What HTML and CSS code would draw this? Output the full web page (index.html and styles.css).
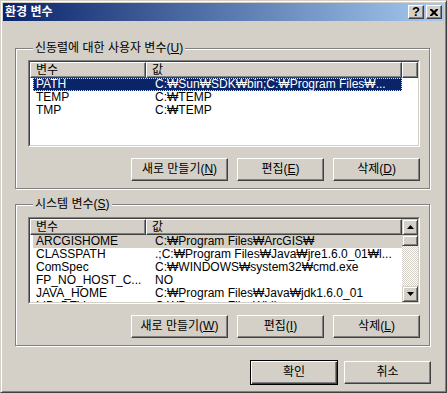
FILE: index.html
```html
<!DOCTYPE html>
<html lang="ko">
<head>
    <meta charset="UTF-8">
    <title>환경 변수</title>
    <link rel="stylesheet" href="styles.css">
</head>
<body>
    <div class="window">
        <div class="titlebar">
            <span class="title">환경 변수</span>
            <div class="caption-buttons">
                <span class="cap-btn help">?</span>
                <span class="cap-btn">
                    <svg width="8" height="7" viewBox="0 0 8 7"><path d="M0 0h2l2 2 2-2h2v1l-2.5 2.5L8 6v1H6L4 5 2 7H0V6l2.5-2.5L0 1z" fill="#000"/></svg>
                </span>
            </div>
        </div>
        <div class="content">
            <div class="group">
                <div class="group-label">신동렬에 대한 사용자 변수(<u>U</u>)</div>
                <div class="list">
                    <div class="list-inner">
                        <div class="list-view">
                            <div class="list-head">
                                <span class="head-cell name">변수</span>
                                <span class="head-cell value">값</span>
                                <span class="head-cell fill"></span>
                            </div>
                            <div class="row selected"><span class="cell name">PATH</span><span class="cell value">C:₩Sun₩SDK₩bin;C:₩Program Files₩...</span></div>
                            <div class="row"><span class="cell name">TEMP</span><span class="cell value">C:₩TEMP</span></div>
                            <div class="row"><span class="cell name">TMP</span><span class="cell value">C:₩TEMP</span></div>
                        </div>
                    </div>
                </div>
                <div class="btn-row">
                    <button class="btn wide">새로 만들기(<u>N</u>)</button>
                    <button class="btn">편집(<u>E</u>)</button>
                    <button class="btn">삭제(<u>D</u>)</button>
                </div>
            </div>
            <div class="group system">
                <div class="group-label">시스템 변수(<u>S</u>)</div>
                <div class="list">
                    <div class="list-inner">
                        <div class="list-view">
                            <div class="list-head">
                                <span class="head-cell name">변수</span>
                                <span class="head-cell value">값</span>
                            </div>
                            <div class="row inactive"><span class="cell name">ARCGISHOME</span><span class="cell value">C:₩Program Files₩ArcGIS₩</span></div>
                            <div class="row"><span class="cell name">CLASSPATH</span><span class="cell value">.;C:₩Program Files₩Java₩jre1.6.0_01₩l...</span></div>
                            <div class="row"><span class="cell name">ComSpec</span><span class="cell value">C:₩WINDOWS₩system32₩cmd.exe</span></div>
                            <div class="row"><span class="cell name">FP_NO_HOST_C...</span><span class="cell value">NO</span></div>
                            <div class="row"><span class="cell name">JAVA_HOME</span><span class="cell value">C:₩Program Files₩Java₩jdk1.6.0_01</span></div>
                            <div class="row"><span class="cell name">LIB_DEV</span><span class="cell value">C:₩Program Files₩Lib</span></div>
                        </div>
                        <div class="scrollbar">
                            <span class="scroll-btn">
                                <svg width="7" height="4" viewBox="0 0 7 4"><path d="M3.5 0L7 4H0z" fill="#000"/></svg>
                            </span>
                            <span class="scroll-thumb"></span>
                            <span class="scroll-track"></span>
                            <span class="scroll-btn">
                                <svg width="7" height="4" viewBox="0 0 7 4"><path d="M0 0h7L3.5 4z" fill="#000"/></svg>
                            </span>
                        </div>
                    </div>
                </div>
                <div class="btn-row">
                    <button class="btn wide">새로 만들기(<u>W</u>)</button>
                    <button class="btn">편집(<u>I</u>)</button>
                    <button class="btn">삭제(<u>L</u>)</button>
                </div>
            </div>
            <div class="dialog-buttons">
                <button class="btn default">확인</button>
                <button class="btn">취소</button>
            </div>
        </div>
    </div>
</body>
</html>
```

FILE: styles.css
```css
body {
    margin: 0;
    background-color: #d4d0c8;
    font-family: "Liberation Sans", "Noto Sans CJK KR", sans-serif;
    font-size: 12px;
    color: #000;
}
.window {
    width: 447px;
    height: 393px;
    box-sizing: border-box;
    padding: 2px;
    border: 1px solid;
    border-color: #d4d0c8 #404040 #404040 #d4d0c8;
    box-shadow: inset 1px 1px #fff, inset -1px -1px #808080;
    background-color: #d4d0c8;
}
.titlebar {
    display: flex;
    align-items: center;
    height: 18px;
    padding: 0 2px;
    background: linear-gradient(to right, #0a246a, #a6caf0);
}
.title {
    flex: 1;
    color: #fff;
    font-weight: bold;
    line-height: 18px;
}
.caption-buttons {
    display: flex;
    gap: 2px;
}
.cap-btn {
    display: flex;
    align-items: center;
    justify-content: center;
    width: 16px;
    height: 14px;
    box-sizing: border-box;
    border: 1px solid;
    border-color: #fff #404040 #404040 #fff;
    box-shadow: inset -1px -1px #808080;
    background-color: #d4d0c8;
}
.cap-btn.help {
    font-weight: bold;
    font-size: 13px;
    line-height: 12px;
}
.content {
    padding: 27px 14px 0 12px;
}
.group {
    padding: 0 9px 7px 12px;
    border: 1px solid #808080;
    box-shadow: inset 1px 1px #fff, 1px 1px #fff;
}
.group.system {
    margin-top: 15px;
}
.group-label {
    width: fit-content;
    margin: -8px 0 0 5px;
    padding: 0 2px;
    line-height: 14px;
    background-color: #d4d0c8;
}
.list {
    margin-top: 5px;
    height: 87px;
    box-sizing: border-box;
    border: 1px solid;
    border-color: #808080 #fff #fff #808080;
}
.list-inner {
    display: flex;
    height: 100%;
    border: 1px solid;
    border-color: #404040 #d4d0c8 #d4d0c8 #404040;
    box-sizing: border-box;
    background-color: #fff;
    overflow: hidden;
}
.system .list {
    margin-top: 6px;
}
.list-view {
    flex: 1;
    min-width: 0;
}
.list-head {
    display: flex;
    height: 16px;
}
.head-cell {
    box-sizing: border-box;
    height: 16px;
    padding-left: 5px;
    line-height: 14px;
    border: 1px solid;
    border-color: #fff #404040 #404040 #fff;
    box-shadow: inset -1px -1px #808080;
    background-color: #d4d0c8;
}
.head-cell.name {
    width: 116px;
}
.head-cell.value {
    width: 256px;
}
.head-cell.fill {
    flex: 1;
}
.row {
    display: flex;
    width: 369px;
    height: 13px;
    margin-left: 3px;
    line-height: 13px;
    white-space: nowrap;
}
.row.selected {
    background-color: #0a246a;
    color: #fff;
    outline: 1px dotted #f5db95;
    outline-offset: -1px;
}
.row.inactive {
    background-color: #d4d0c8;
}
.cell.name {
    width: 113px;
    padding-left: 3px;
    flex-shrink: 0;
}
.cell.value {
    padding-left: 6px;
}
.scrollbar {
    display: flex;
    flex-direction: column;
    width: 16px;
    flex-shrink: 0;
    background: repeating-conic-gradient(#d4d0c8 0 25%, #fff 0 50%) 0 0 / 2px 2px;
}
.scroll-btn,
.scroll-thumb {
    display: flex;
    align-items: center;
    justify-content: center;
    height: 16px;
    box-sizing: border-box;
    border: 1px solid;
    border-color: #d4d0c8 #404040 #404040 #d4d0c8;
    box-shadow: inset 1px 1px #fff, inset -1px -1px #808080;
    background-color: #d4d0c8;
}
.scroll-thumb {
    height: 11px;
}
.scroll-track {
    flex: 1;
}
.btn-row {
    display: flex;
    justify-content: flex-end;
    gap: 9px;
    margin-top: 11px;
}
.btn {
    width: 87px;
    height: 23px;
    padding: 0;
    box-sizing: border-box;
    border: 1px solid;
    border-color: #fff #404040 #404040 #fff;
    box-shadow: inset -1px -1px #808080;
    background-color: #d4d0c8;
    font: inherit;
    color: #000;
    line-height: 19px;
}
.btn.wide {
    width: 97px;
}
.btn u {
    text-underline-offset: 1px;
}
.dialog-buttons {
    display: flex;
    justify-content: flex-end;
    align-items: center;
    gap: 6px;
    margin: 14px -1px 0 0;
}
.btn.default {
    width: 88px;
    height: 25px;
    border: 1px solid #000;
    box-shadow: inset 1px 1px #fff, inset -1px -1px #404040, inset -2px -2px #808080;
}
```
